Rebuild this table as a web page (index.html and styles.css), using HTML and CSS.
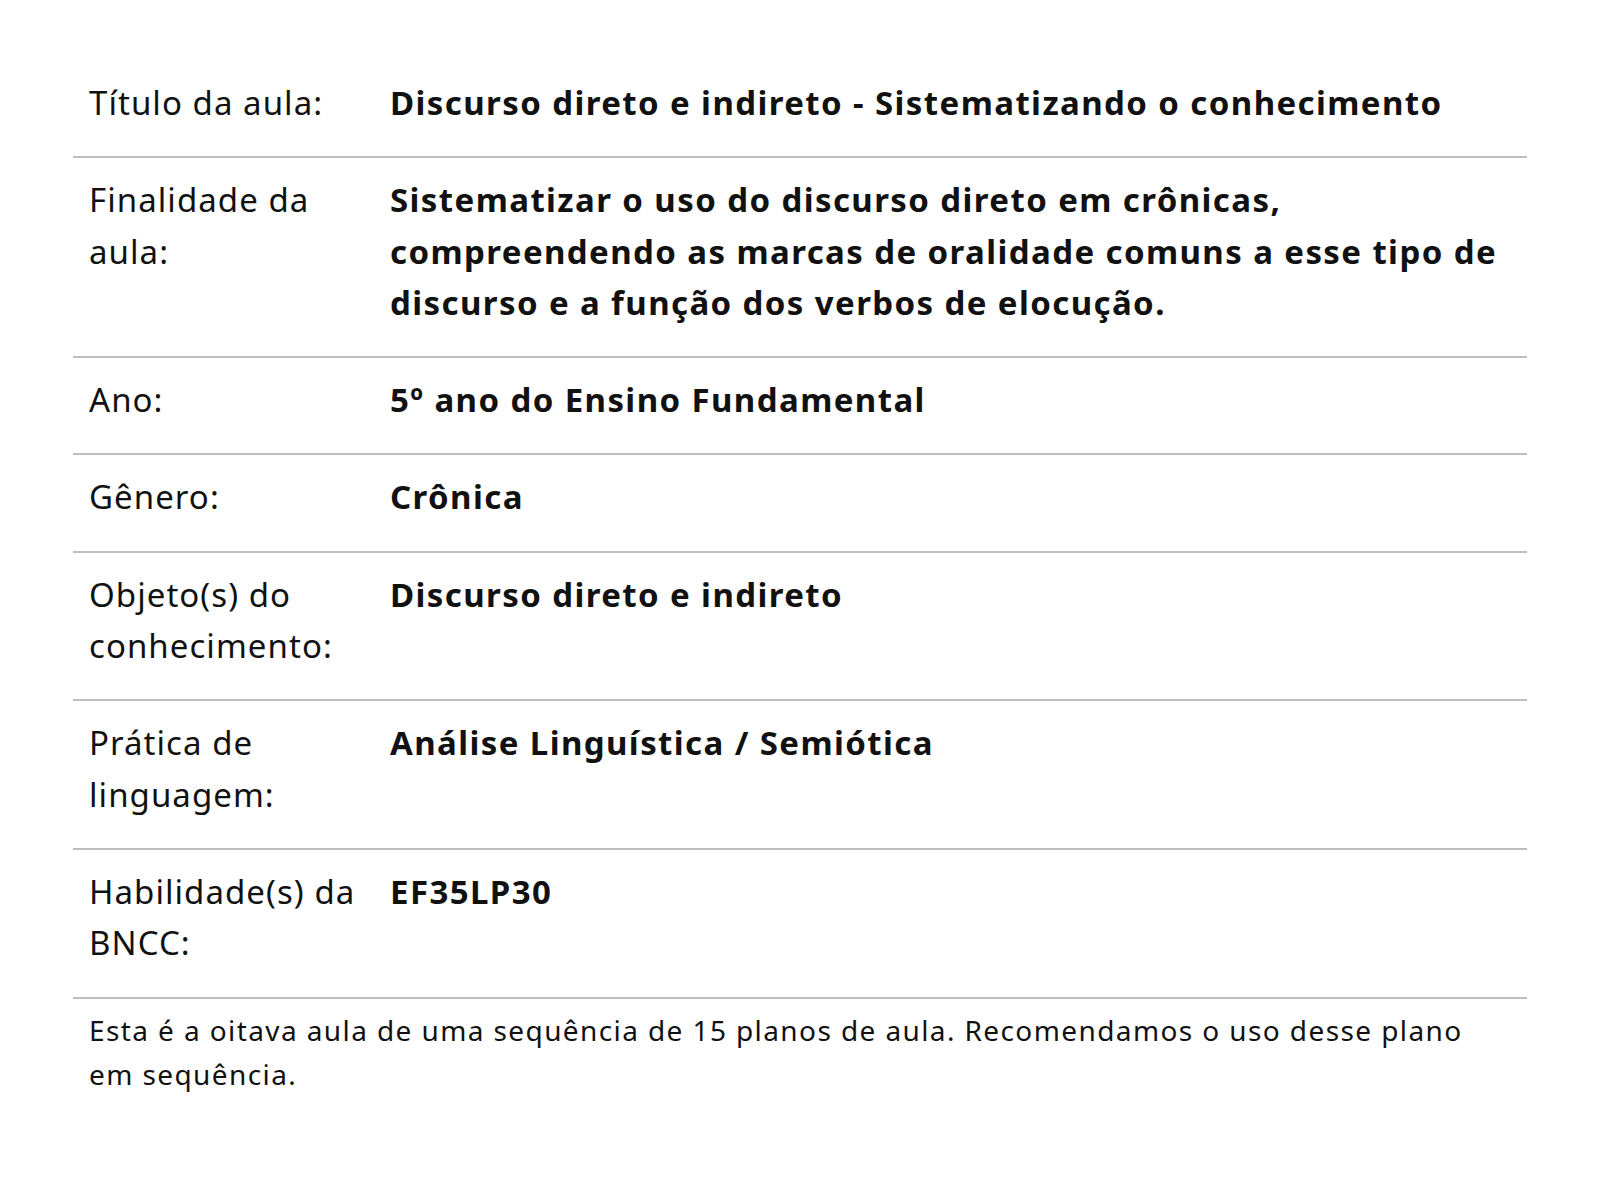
FILE: index.html
```html
<!DOCTYPE html>
<html lang="pt-BR">
<head>
<meta charset="utf-8">
<title>Plano de aula</title>
<link rel="stylesheet" href="styles.css">
</head>
<body>
<main class="page">
  <table class="plan">
    <tbody>
      <tr><th>Título da aula:</th><td>Discurso direto e indireto - Sistematizando o conhecimento</td></tr>
      <tr><th>Finalidade da aula:</th><td>Sistematizar o uso do discurso direto em crônicas, compreendendo as marcas de oralidade comuns a esse tipo de discurso e a função dos verbos de elocução.</td></tr>
      <tr><th>Ano:</th><td>5º ano do Ensino Fundamental</td></tr>
      <tr><th>Gênero:</th><td>Crônica</td></tr>
      <tr><th>Objeto(s) do conhecimento:</th><td>Discurso direto e indireto</td></tr>
      <tr><th>Prática de linguagem:</th><td>Análise Linguística / Semiótica</td></tr>
      <tr><th>Habilidade(s) da BNCC:</th><td>EF35LP30</td></tr>
    </tbody>
  </table>
  <p class="note">Esta é a oitava aula de uma sequência de 15 planos de aula. Recomendamos o uso desse plano em sequência.</p>
</main>
</body>
</html>
```
FILE: styles.css
```css
html, body {
  margin: 0;
  padding: 0;
  background: #fff;
}
body {
  font-family: "Noto Sans", "Open Sans", sans-serif;
  color: #111;
}
.page {
  padding: 60px 73px 0 73px;
}
.plan {
  width: 100%;
  border-collapse: collapse;
  font-size: 33px;
  line-height: 51.3px;
  letter-spacing: 1.4px;
}
.plan th,
.plan td {
  text-align: left;
  vertical-align: top;
  padding: 16px 16px 28px 16px;
  border-bottom: 2px solid #bdbdbd;
}
.plan th {
  width: 286px;
  padding-right: 0;
  font-weight: 400;
  letter-spacing: 1.05px;
}
.plan td {
  font-weight: 700;
  padding-left: 15px;
  padding-right: 24px;
}
.plan tr:first-child th,
.plan tr:first-child td {
  padding-top: 17px;
}
.note {
  margin: 9px 0 0 0;
  padding: 0 16px 0 16px;
  font-size: 28px;
  line-height: 44px;
  letter-spacing: 1.4px;
}
```
